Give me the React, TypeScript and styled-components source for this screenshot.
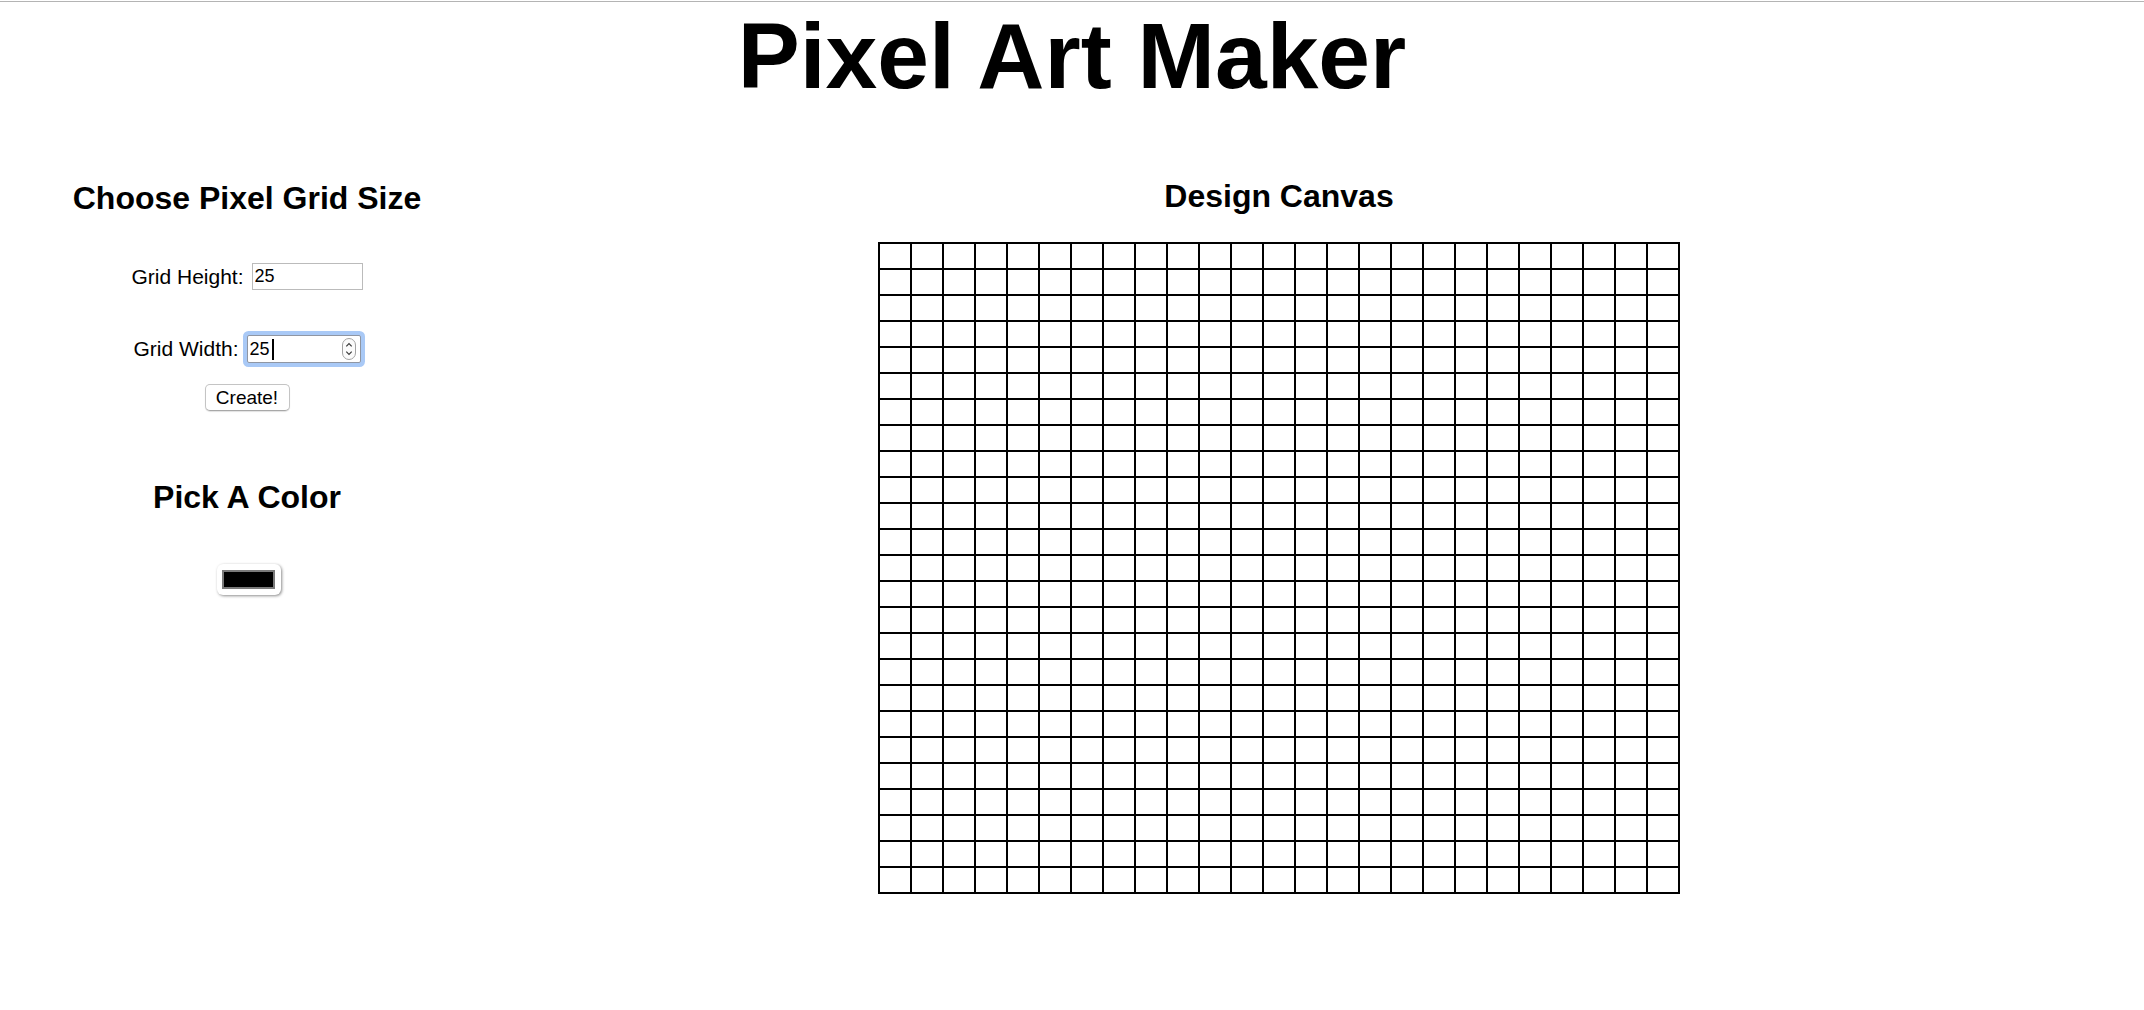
import React from "react";
import styled, { createGlobalStyle } from "styled-components";

const GlobalStyle = createGlobalStyle`
  html, body {
    margin: 0;
    padding: 0;
    background: #ffffff;
  }
  body {
    font-family: "Liberation Sans", Arial, Helvetica, sans-serif;
    color: #000000;
  }
`;

const Page = styled.div`
  box-sizing: border-box;
  width: 2144px;
  min-height: 1008px;
  margin-top: 1px;
  border-top: 1px solid #b4b4b4;
  padding: 0 8px;
`;

const Title = styled.h1`
  margin: 4px 0 0;
  font-size: 93px;
  line-height: 100px;
  font-weight: 700;
  text-align: center;
`;

const Main = styled.main`
  display: flex;
  margin-top: 72px;
`;

const Column = styled.section<{ $width: number; $offset?: number }>`
  display: flex;
  flex-direction: column;
  align-items: center;
  width: ${(p) => p.$width}px;
  padding-top: ${(p) => p.$offset ?? 0}px;
`;

const Heading = styled.h2<{ $gap?: number }>`
  margin: ${(p) => p.$gap ?? 0}px 0 0;
  font-size: 32px;
  line-height: 36px;
  font-weight: 700;
`;

const FieldRow = styled.div<{ $gap: number }>`
  display: flex;
  align-items: center;
  gap: 8px;
  margin-top: ${(p) => p.$gap}px;
`;

const Label = styled.label`
  font-size: 21px;
  line-height: 24px;
  white-space: nowrap;
`;

const Field = styled.div<{ $w: number; $h: number; $focused?: boolean }>`
  box-sizing: border-box;
  display: flex;
  align-items: center;
  width: ${(p) => p.$w}px;
  height: ${(p) => p.$h}px;
  padding: 0 4px 0 2px;
  background: #ffffff;
  border: 1px solid ${(p) => (p.$focused ? "#8f96a3" : "#bbbbbb")};
  border-radius: ${(p) => (p.$focused ? "2px" : "0")};
  box-shadow: ${(p) => (p.$focused ? "0 0 0 4px #a9c9f6" : "none")};
`;

const FieldInput = styled.input<{ $fit?: boolean }>`
  flex: ${(p) => (p.$fit ? "0 0 21px" : "1 1 auto")};
  width: ${(p) => (p.$fit ? "21px" : "auto")};
  min-width: 0;
  height: 100%;
  padding: 0;
  margin: 0;
  border: none;
  outline: none;
  background: transparent;
  font-family: "Liberation Sans", Arial, Helvetica, sans-serif;
  font-size: 18px;
  color: #000000;
`;

const Caret = styled.span`
  flex: 0 0 auto;
  width: 2px;
  height: 21px;
  margin-left: 1px;
  background: #000000;
`;

const Spacer = styled.span`
  flex: 1 1 auto;
`;

const CreateButton = styled.button`
  box-sizing: border-box;
  width: 85px;
  height: 27px;
  margin-top: 21px;
  padding: 0;
  background: #ffffff;
  border: 1px solid #c4c4c4;
  border-bottom-color: #a8a8a8;
  border-radius: 5px;
  box-shadow: 0 1px 1px rgba(0, 0, 0, 0.12);
  font-family: "Liberation Sans", Arial, Helvetica, sans-serif;
  font-size: 19px;
  color: #000000;
`;

const ColorButton = styled.button`
  box-sizing: border-box;
  display: flex;
  width: 64px;
  height: 31px;
  margin-top: 49px;
  margin-left: 3px;
  padding: 6px 6px 6px 5px;
  background: #ffffff;
  border: none;
  border-radius: 6px;
  box-shadow: 1px 1px 3px rgba(0, 0, 0, 0.45);
`;

const Swatch = styled.span<{ $color: string }>`
  box-sizing: border-box;
  display: block;
  width: 53px;
  height: 19px;
  border: 2px solid #7a7a7a;
  background: ${(p) => p.$color};
`;

const Canvas = styled.div<{ $cols: number; $rows: number }>`
  display: grid;
  grid-template-columns: repeat(${(p) => p.$cols}, 30px);
  grid-template-rows: repeat(${(p) => p.$rows}, 24px);
  gap: 2px;
  padding: 2px;
  margin-top: 28px;
  background: #000000;
`;

const Cell = styled.div`
  background: #ffffff;
`;

const Spinner = () => (
  <svg width="14" height="22" viewBox="0 0 14 22" aria-hidden="true">
    <rect x="0.5" y="0.5" width="13" height="21" rx="6.5" fill="#fbfbfb" stroke="#a3a3a3" />
    <path d="M4.3 8.3 L7 5.6 L9.7 8.3" fill="none" stroke="#3a3a3a" strokeWidth="1.2" />
    <path d="M4.3 13.7 L7 16.4 L9.7 13.7" fill="none" stroke="#3a3a3a" strokeWidth="1.2" />
  </svg>
);

const ROWS = 25;
const COLS = 25;

export default function App() {
  const cells = Array.from({ length: ROWS * COLS }, (_, i) => <Cell key={i} />);
  return (
    <>
      <GlobalStyle />
      <Page>
        <Title>Pixel Art Maker</Title>
        <Main>
          <Column $width={478} $offset={2}>
            <Heading>Choose Pixel Grid Size</Heading>
            <FieldRow $gap={47}>
              <Label htmlFor="gridHeight">Grid Height:</Label>
              <Field $w={111} $h={27}>
                <FieldInput id="gridHeight" type="text" defaultValue="25" />
              </Field>
            </FieldRow>
            <FieldRow $gap={45}>
              <Label htmlFor="gridWidth">Grid Width:</Label>
              <Field $w={114} $h={28} $focused>
                <FieldInput id="gridWidth" type="text" defaultValue="25" $fit />
                <Caret />
                <Spacer />
                <Spinner />
              </Field>
            </FieldRow>
            <CreateButton type="button">Create!</CreateButton>
            <Heading $gap={68}>Pick A Color</Heading>
            <ColorButton type="button" aria-label="Pick a color">
              <Swatch $color="#000000" />
            </ColorButton>
          </Column>
          <Column $width={1586}>
            <Heading>Design Canvas</Heading>
            <Canvas $cols={COLS} $rows={ROWS}>
              {cells}
            </Canvas>
          </Column>
        </Main>
      </Page>
    </>
  );
}
